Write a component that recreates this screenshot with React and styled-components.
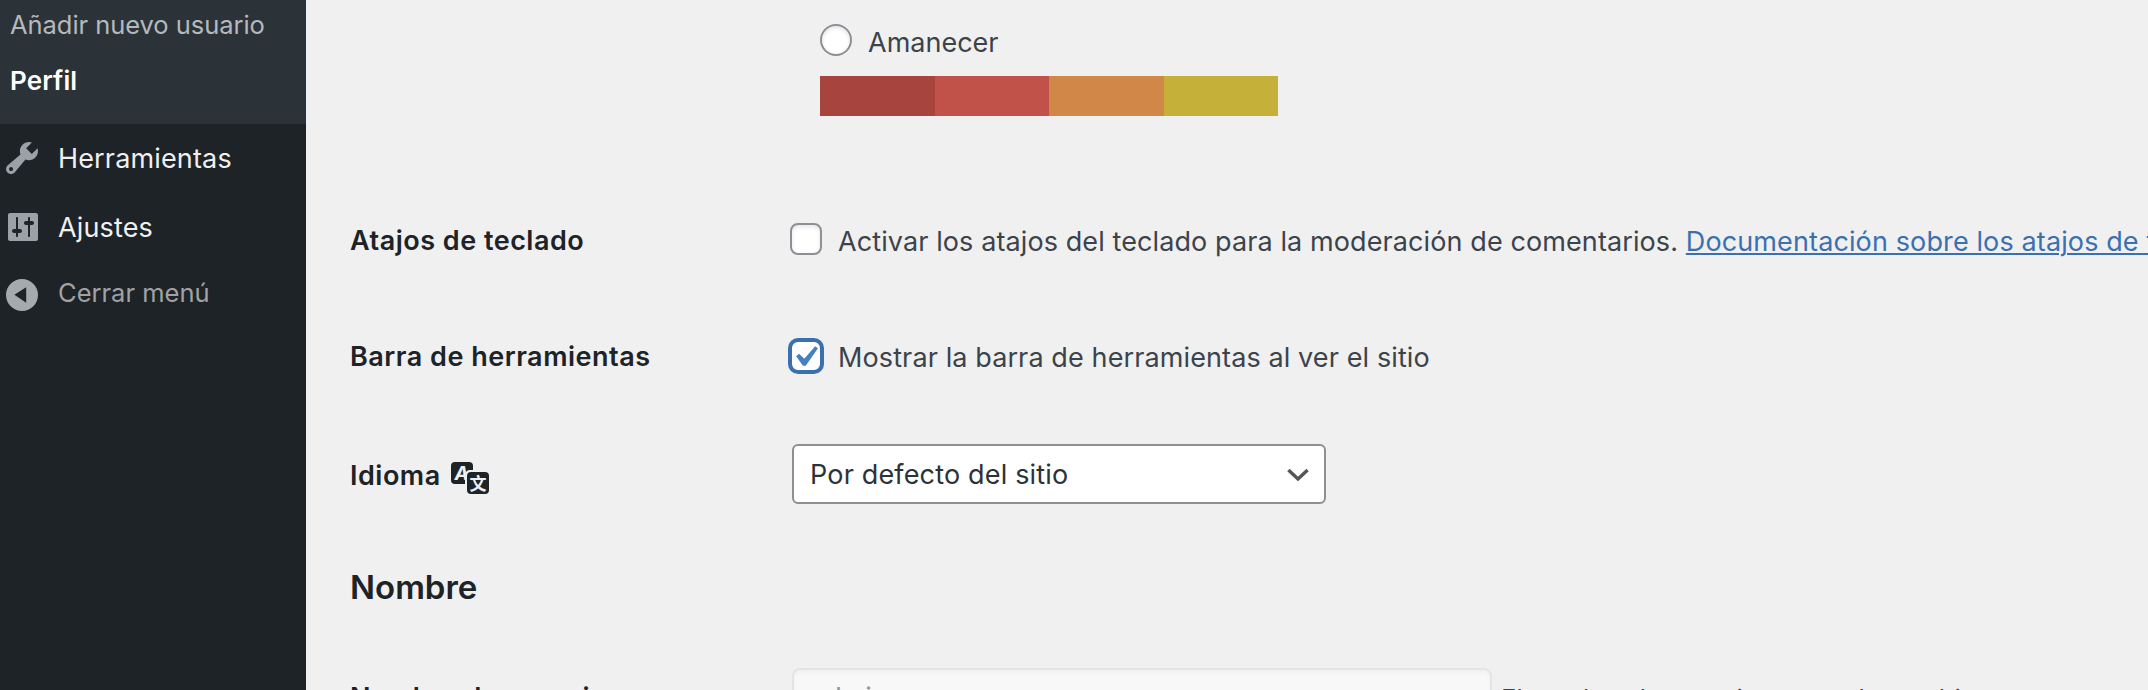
import React from "react";
import styled, { createGlobalStyle, css } from "styled-components";

const GlobalStyle = createGlobalStyle`
  *, *::before, *::after { box-sizing: border-box; }
  body {
    margin: 0;
    overflow: hidden;
    background: #f0f0f0;
    color: #3c434a;
    font-family: Inter, "Liberation Sans", sans-serif;
    font-size: 27px;
    line-height: 36px;
  }
`;

const Page = styled.div`
  display: flex;
  height: 690px;
  overflow: hidden;
  white-space: nowrap;
`;

/* Sidebar */
const Sidebar = styled.nav`
  flex: none;
  width: 306px;
  background: #1d2327;
`;

const Submenu = styled.div`
  height: 124px;
  overflow: hidden;
  background: #2c3338;
`;

const SubmenuItem = styled.a`
  display: flex;
  align-items: center;
  height: 56px;
  padding-left: 10px;
  font-size: ${(p) => (p.$current ? "26px" : "25.5px")};
  font-weight: ${(p) => (p.$current ? 600 : 400)};
  letter-spacing: ${(p) => (p.$current ? "0.1px" : "-0.05px")};
  color: ${(p) => (p.$current ? "#fff" : "#b4b9be")};

  &:first-child { margin-top: -3px; }
`;

const MenuItem = styled.a`
  display: flex;
  align-items: center;
  gap: 16px;
  height: ${(p) => p.$height}px;
  padding: 2px 0 0 2px;
  color: #f0f0f1;
  letter-spacing: 0.15px;

  ${(p) =>
    p.$muted &&
    css`
      padding-top: 0;
      color: #a0a3a6;
      font-size: 25.5px;
      letter-spacing: 0;
    `}
`;

const MenuIcon = styled.svg`
  flex: none;
  width: 40px;
  height: 40px;
  fill: ${(p) => (p.$light ? "#a7aaad" : "#9ca1a7")};
  margin-top: ${(p) => (p.$light ? "5px" : "-2px")};
`;

/* Settings form */
const Content = styled.main`
  flex: 1;
  min-width: 0;
  padding-left: 44px;
`;

const ColorScheme = styled.section`
  height: 182px;
  padding: 24px 0 0 470px;
`;

const RadioLabel = styled.label`
  display: flex;
  align-items: center;
  gap: 16px;
  height: 32px;
`;

const Radio = styled.span`
  width: 32px;
  height: 32px;
  border: 2px solid #8c8f94;
  border-radius: 50%;
  background: #fff;
  box-shadow: inset 0 2px 4px rgba(0, 0, 0, 0.1);
`;

const RadioText = styled.span`
  padding-top: 6px;
`;

const Palette = styled.div`
  display: flex;
  width: 458px;
  height: 40px;
  margin-top: 20px;
`;

const Swatch = styled.span`
  flex: 1;
  background: ${(p) => p.$color};
`;

const Row = styled.div`
  display: flex;
  align-items: center;
  height: ${(p) => p.$height || 116}px;
`;

const RowLabel = styled.div`
  flex: none;
  display: flex;
  align-items: center;
  width: 440px;
  padding-top: ${(p) => p.$drop || 0}px;
  color: #1d2327;
  font-weight: 600;
  letter-spacing: 0.5px;
`;

const Checkbox = styled.span`
  flex: none;
  width: 32px;
  height: 32px;
  margin-right: 16px;
  border: 2px solid #8c8f94;
  border-radius: 8px;
  background: #fff;
  box-shadow: inset 0 2px 4px rgba(0, 0, 0, 0.1);

  ${(p) =>
    p.$checked
      ? css`
          border-color: #3a70b0;
          box-shadow: 0 0 0 2px #3a70b0;
        `
      : css`
          margin-top: -2px;
        `}
`;

const CheckMark = styled.svg`
  display: block;
  width: 42px;
  height: 42px;
  margin: -6px 0 0 -8px;
  fill: #4580c3;
`;

const CheckText = styled.span`
  padding-top: 4px;
  letter-spacing: ${(p) => p.$spacing};
`;

const Link = styled.a`
  color: #3a70b0;
  letter-spacing: 0.12px;
  text-decoration: underline;
  text-decoration-thickness: 2px;
  text-underline-offset: 2px;
`;

const TranslateIcon = styled.svg`
  width: 38px;
  height: 32px;
  margin: 3px 0 0 10px;
`;

const Select = styled.div`
  display: flex;
  align-items: center;
  justify-content: space-between;
  width: 534px;
  height: 60px;
  margin-left: 2px;
  padding: 2px 15px 0 16px;
  border: 2px solid #8c8f94;
  border-radius: 6px;
  background: #fff;
  color: #2c3338;
  letter-spacing: 0.17px;
`;

const Chevron = styled.svg`
  width: 22px;
  height: 14px;
  fill: none;
  stroke: #555;
  stroke-width: 3.4;
`;

const SectionTitle = styled.h2`
  height: 134px;
  margin: 0;
  padding-top: 33px;
  color: #1d2327;
  font-size: 33px;
  font-weight: 600;
  line-height: 40px;
`;

const DisabledInput = styled.div`
  display: flex;
  align-items: center;
  width: 700px;
  height: 60px;
  margin-left: 2px;
  padding-left: 16px;
  border: 2px solid #e4e4e5;
  border-radius: 8px;
  background: #f8f8f8;
  box-shadow: inset 0 2px 4px rgba(0, 0, 0, 0.04);
  color: #8e9294;
`;

const Description = styled.span`
  margin-left: 9px;
  padding-top: 2px;
  font-size: 25.7px;
`;

const palette = ["#a6443d", "#c0524a", "#d18748", "#c5b03a"];

export default function App() {
  return (
    <>
      <GlobalStyle />
      <Page>
        <Sidebar>
          <Submenu>
            <SubmenuItem>Añadir nuevo usuario</SubmenuItem>
            <SubmenuItem $current>Perfil</SubmenuItem>
          </Submenu>
          <MenuItem $height={68}>
            <MenuIcon viewBox="0 0 20 20">
              <path d="M16.68 9.77c-1.34 1.34-3.3 1.67-4.95.99l-5.41 6.52c-.99.99-2.59.99-3.58 0s-.99-2.59 0-3.57l6.52-5.42c-.68-1.65-.35-3.61.99-4.95 1.28-1.28 3.12-1.62 4.72-1.06l-2.89 2.89 2.82 2.82 2.86-2.87c.53 1.58.18 3.39-1.08 4.65zM3.81 16.21c.4.39 1.04.39 1.43 0 .4-.4.4-1.04 0-1.43-.39-.4-1.03-.4-1.43 0-.39.39-.39 1.03 0 1.43z" />
            </MenuIcon>
            Herramientas
          </MenuItem>
          <MenuItem $height={70}>
            <MenuIcon viewBox="0 0 20 20">
              <path d="M18 16V4c0-.55-.45-1-1-1H4c-.55 0-1 .45-1 1v12c0 .55.45 1 1 1h13c.55 0 1-.45 1-1zM8 11h1c.55 0 1 .45 1 1s-.45 1-1 1H8v1.5c0 .28-.22.5-.5.5s-.5-.22-.5-.5V13H6c-.55 0-1-.45-1-1s.45-1 1-1h1V5.5c0-.28.22-.5.5-.5s.5.22.5.5V11zm5-2h-1c-.55 0-1-.45-1-1s.45-1 1-1h1V5.5c0-.28.22-.5.5-.5s.5.22.5.5V7h1c.55 0 1 .45 1 1s-.45 1-1 1h-1v5.5c0 .28-.22.5-.5.5s-.5-.22-.5-.5V9z" />
            </MenuIcon>
            Ajustes
          </MenuItem>
          <MenuItem $height={61} $muted>
            <MenuIcon viewBox="0 0 20 20" $light>
              <path
                fillRule="evenodd"
                d="M10 2a8 8 0 1 1 0 16 8 8 0 0 1 0-16zM6.2 9.9 12.1 13.9V6.1z"
              />
            </MenuIcon>
            Cerrar menú
          </MenuItem>
        </Sidebar>

        <Content>
          <ColorScheme>
            <RadioLabel>
              <Radio />
              <RadioText>Amanecer</RadioText>
            </RadioLabel>
            <Palette>
              {palette.map((color) => (
                <Swatch key={color} $color={color} />
              ))}
            </Palette>
          </ColorScheme>

          <Row>
            <RowLabel $drop={2}>Atajos de teclado</RowLabel>
            <Checkbox />
            <CheckText $spacing="0.1px">
              Activar los atajos del teclado para la moderación de comentarios.{" "}
              <Link>Documentación sobre los atajos de teclado</Link>
            </CheckText>
          </Row>

          <Row>
            <RowLabel $drop={2}>Barra de herramientas</RowLabel>
            <Checkbox $checked>
              <CheckMark viewBox="0 0 20 20">
                <path d="M14.83 4.89l1.34.94-5.81 8.38H9.02L5.78 9.67l1.34-1.25 2.57 2.4z" />
              </CheckMark>
            </Checkbox>
            <CheckText $spacing="0.11px">
              Mostrar la barra de herramientas al ver el sitio
            </CheckText>
          </Row>

          <Row $height={120}>
            <RowLabel $drop={4}>
              Idioma
              <TranslateIcon viewBox="0 0 38 32">
                <rect width="22" height="22" rx="4" fill="#1d2327" />
                <text
                  x="3.5"
                  y="18"
                  fill="#f0f0f0"
                  fontFamily="Inter, sans-serif"
                  fontSize="19"
                  fontWeight="700"
                  fontStyle="italic"
                  letterSpacing="0"
                >
                  A
                </text>
                <rect x="14" y="8" width="26" height="26" rx="5" fill="#f0f0f0" />
                <rect x="16" y="10" width="22" height="22" rx="4" fill="#1d2327" />
                <text
                  x="27"
                  y="27.5"
                  fill="#f0f0f0"
                  fontFamily='"Noto Sans CJK SC", sans-serif'
                  fontSize="17"
                  fontWeight="700"
                  textAnchor="middle"
                  letterSpacing="0"
                >
                  文
                </text>
              </TranslateIcon>
            </RowLabel>
            <Select>
              Por defecto del sitio
              <Chevron viewBox="0 0 22 14">
                <path d="M1.4 1.9 11 11 20.6 1.9" />
              </Chevron>
            </Select>
          </Row>

          <SectionTitle>Nombre</SectionTitle>

          <Row $height={60}>
            <RowLabel>Nombre de usuario</RowLabel>
            <DisabledInput>admin</DisabledInput>
            <Description>El nombre de usuario no puede cambiarse.</Description>
          </Row>
        </Content>
      </Page>
    </>
  );
}
